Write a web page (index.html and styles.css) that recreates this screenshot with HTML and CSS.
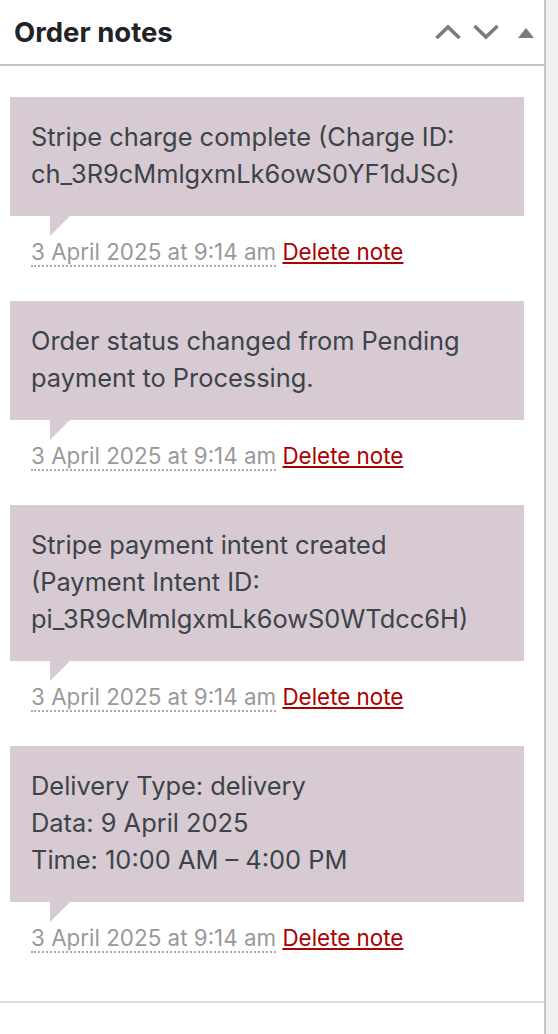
FILE: index.html
```html
<!DOCTYPE html>
<html lang="en">
<head>
<meta charset="utf-8">
<title>Order notes</title>
<link rel="stylesheet" href="styles.css">
</head>
<body>
<div class="column">
  <div class="postbox">
    <div class="postbox-header">
      <h2 class="postbox-title">Order notes</h2>
      <div class="handle-actions">
        <button class="handle-btn handle-up" aria-label="Move up">
          <svg width="28" height="16" viewBox="0 0 28 16"><polyline points="2.5,14 14,3 25.5,14" fill="none" stroke="#787c82" stroke-width="3.6"/></svg>
        </button>
        <button class="handle-btn handle-down" aria-label="Move down">
          <svg width="28" height="16" viewBox="0 0 28 16"><polyline points="2.5,2 14,13 25.5,2" fill="none" stroke="#787c82" stroke-width="3.6"/></svg>
        </button>
        <button class="handle-btn handle-toggle" aria-label="Toggle panel">
          <svg width="16" height="10" viewBox="0 0 16 10"><polygon points="8,0 16,10 0,10" fill="#787c82"/></svg>
        </button>
      </div>
    </div>
    <ul class="order-notes">
      <li class="note">
        <div class="note-content">Stripe charge complete (Charge ID:<br>ch_3R9cMmlgxmLk6owS0YF1dJSc)</div>
        <p class="meta"><abbr class="exact-date" title="2025-04-03 09:14:00">3 April 2025 at 9:14 am</abbr> <a href="#" class="delete-note">Delete note</a></p>
      </li>
      <li class="note">
        <div class="note-content">Order status changed from Pending<br>payment to Processing.</div>
        <p class="meta"><abbr class="exact-date" title="2025-04-03 09:14:00">3 April 2025 at 9:14 am</abbr> <a href="#" class="delete-note">Delete note</a></p>
      </li>
      <li class="note">
        <div class="note-content">Stripe payment intent created<br>(Payment Intent ID:<br>pi_3R9cMmlgxmLk6owS0WTdcc6H)</div>
        <p class="meta"><abbr class="exact-date" title="2025-04-03 09:14:00">3 April 2025 at 9:14 am</abbr> <a href="#" class="delete-note">Delete note</a></p>
      </li>
      <li class="note">
        <div class="note-content">Delivery Type: delivery<br>Data: 9 April 2025<br>Time: 10:00 AM – 4:00 PM</div>
        <p class="meta"><abbr class="exact-date" title="2025-04-03 09:14:00">3 April 2025 at 9:14 am</abbr> <a href="#" class="delete-note">Delete note</a></p>
      </li>
    </ul>
  </div>
</div>
</body>
</html>
```

FILE: styles.css
```css
html, body {
  margin: 0;
  padding: 0;
}
body {
  background: #f0f0f1;
  font-family: Inter, "Liberation Sans", sans-serif;
  color: #3c434a;
}
.column {
  width: 546px;
  box-sizing: border-box;
  min-height: 100vh;
  background: #fff;
  border-right: 2px solid #c3c4c7;
}
.postbox {
  border-bottom: 2px solid #dcdcde;
}
.postbox-header {
  height: 64px;
  display: flex;
  align-items: center;
  border-bottom: 2px solid #c3c4c7;
  padding: 0 10px 0 14px;
}
.postbox-title {
  margin: 0;
  font-size: 27.5px;
  font-weight: 700;
  color: #1d2327;
  letter-spacing: 0;
}
.handle-actions {
  margin-left: auto;
  display: flex;
  align-items: center;
}
.handle-btn {
  border: 0;
  background: none;
  padding: 0;
  margin: 0;
  display: flex;
  align-items: center;
  justify-content: center;
}
.handle-up {
  margin-right: 10px;
}
.handle-down {
  margin-right: 18px;
}
.handle-toggle {
  padding-top: 2px;
}
.order-notes {
  list-style: none;
  margin: 0;
  padding: 31px 20px 14px 10px;
}
.note {
  margin: 0 0 34px;
}
.note-content {
  position: relative;
  background: #d7cad2;
  padding: 21px 21px 24px;
  font-size: 25.4px;
  line-height: 37px;
  color: #3c434a;
}
.note-content::after {
  content: "";
  position: absolute;
  left: 40px;
  bottom: -20px;
  width: 0;
  height: 0;
  border-style: solid;
  border-width: 20px 20px 0 0;
  border-color: #d7cad2 transparent transparent transparent;
}
.meta {
  margin: 21px 0 0 21px;
  font-size: 22.4px;
  line-height: 30px;
  color: #999;
}
.exact-date {
  text-decoration: none;
  border-bottom: 2px dotted #aaa;
}
.delete-note {
  color: #a00;
  text-decoration: underline;
  text-decoration-thickness: 2px;
  text-underline-offset: 2px;
}
```
